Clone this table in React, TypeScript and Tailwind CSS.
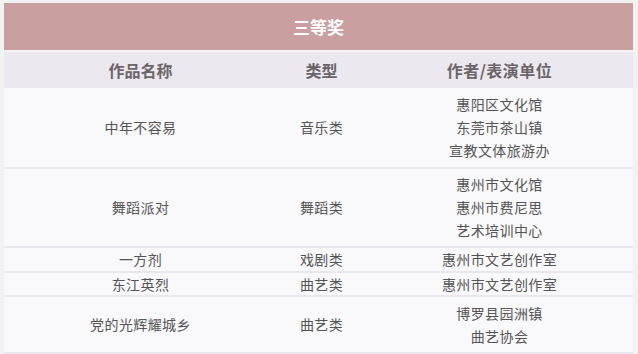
import React from "react";

type Row = { name: string; type: string; units: string[]; h: string };

const rows: Row[] = [
  { name: "中年不容易", type: "音乐类", units: ["惠阳区文化馆", "东莞市茶山镇", "宣教文体旅游办"], h: "h-[79px]" },
  { name: "舞蹈派对", type: "舞蹈类", units: ["惠州市文化馆", "惠州市费尼思", "艺术培训中心"], h: "h-[77px]" },
  { name: "一方剂", type: "戏剧类", units: ["惠州市文艺创作室"], h: "h-[23px]" },
  { name: "东江英烈", type: "曲艺类", units: ["惠州市文艺创作室"], h: "h-[22px]" },
  { name: "党的光辉耀城乡", type: "曲艺类", units: ["博罗县园洲镇", "曲艺协会"], h: "h-[55px]" },
];

export default function App() {
  return (
    <div
      className="w-[638px] h-[354px] bg-[#f2f2f2] pl-[4px] pt-[3px] overflow-hidden"
      style={{ fontFamily: '"Noto Sans CJK SC", "Noto Sans", sans-serif' }}
    >
      <div className="w-[629px] flex flex-col">
        <div className="h-[47px] bg-[#c99f9f] flex items-center justify-center text-white font-bold text-[17px]">
          三等奖
        </div>
        <div className="h-[2px] bg-[#f4f2f6]" />
        <div className="h-[36px] bg-[#ebe8ef] flex items-center text-[16px] font-bold text-[#6b6469]">
          <div className="w-[273px] text-center">作品名称</div>
          <div className="w-[89px] text-center">类型</div>
          <div className="w-[267px] text-center tracking-[0.5px]">作者/表演单位</div>
        </div>
        {rows.map((r, i) => (
          <React.Fragment key={i}>
            <div className={`${r.h} bg-[#f9f8fb] flex items-center text-[14px] text-[#555555] tracking-[0.4px]`}>
              <div className="w-[273px] text-center">{r.name}</div>
              <div className="w-[89px] text-center">{r.type}</div>
              <div className="w-[267px] flex flex-col items-center">
                {r.units.map((u) => (
                  <div key={u} className="h-[23px] leading-[23px]">
                    {u}
                  </div>
                ))}
              </div>
            </div>
            <div className="h-[2px] bg-[#e9e6ee]" />
          </React.Fragment>
        ))}
      </div>
    </div>
  );
}
